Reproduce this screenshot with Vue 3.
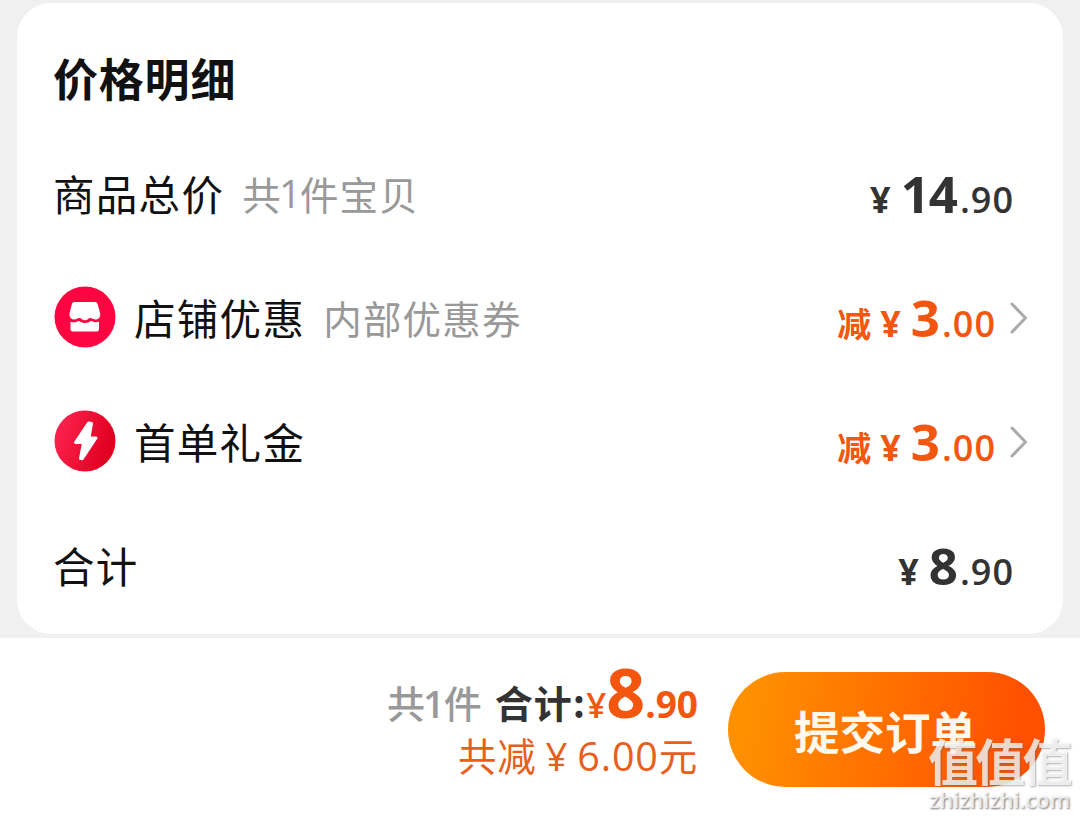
<script setup>
  const rows = [
    { id: 'goods', label: '商品总价', note: ['共', '1', '件宝贝'], int: '14', dec: '.90' },
    { id: 'shop', label: '店铺优惠', note: ['内部优惠券'], icon: 'shop', int: '3', dec: '.00', minus: true },
    { id: 'gift', label: '首单礼金', icon: 'flash', int: '3', dec: '.00', minus: true },
    { id: 'total', label: '合计', int: '8', dec: '.90' },
  ];

  function submit() {
    console.log('submit order');
  }
</script>
<template>
  <div class="page">
    <section class="card">
      <h2 class="title">价格明细</h2>
      <div v-for="row in rows" :key="row.id" class="row">
        <svg v-if="row.icon == 'shop'" class="icon" viewBox="0 0 62 62">
          <circle cx="31" cy="31" r="30.5" fill="#fd0540" />
          <path d="M20.5 16h20.500q2 0 2.600 2l2.500 9c.8 4.500-2 6.500-4.300 6.500-2.800 0-3.500-1.500-5.600-1.500s-2.500 2.300-5.200 2.300-3.500-2.300-5.600-2.300-2.700 1.500-5.200 1.500c-2.700 0-5.200-2-4.600-6.500l2.300-9q.6-2 2.600-2z" fill="#fff" />
          <path d="M16.500 35.800c4 1.300 6.500 0 8.500-1 2.200 2.500 8.500 3.200 12 0 2 1.200 4.500 2 8 1v7.400q0 2.300-2.300 2.300h-23.900q-2.300 0-2.300-2.300z" fill="#fff" />
        </svg>
        <svg v-if="row.icon == 'flash'" class="icon" viewBox="0 0 62 62">
          <defs>
            <linearGradient id="flash" x1="0" y1="0" x2="1" y2="0.3">
              <stop offset="0.1" stop-color="#fd234f" />
              <stop offset="1" stop-color="#e00020" />
            </linearGradient>
          </defs>
          <circle cx="31" cy="31" r="30.5" fill="url(#flash)" />
          <path d="M34.500 13 21.500 32.500h8l-3 16 1.500 .3L42 28h-7l2.500-14.500z" fill="#fff" stroke="#fff" stroke-width="3" stroke-linejoin="round" />
        </svg>
        <span class="label">{{ row.label }}</span>
        <span v-if="row.note" class="note">
          <span v-for="part in row.note" :key="part" :class="{ num: part == '1' }">{{ part }}</span>
        </span>
        <div class="amount" :class="{ minus: row.minus }">
          <span v-if="row.minus" class="cut">减</span>
          <span class="yen">¥</span>
          <span class="int">{{ row.int }}</span>
          <span class="dec">{{ row.dec }}</span>
        </div>
        <svg v-if="row.minus" class="arrow" viewBox="0 0 18 32">
          <path d="M2 2 15.500 16 2 30" fill="none" stroke="#aaa" stroke-width="3" stroke-linecap="round" stroke-linejoin="round" />
        </svg>
      </div>
    </section>

    <footer class="bar">
      <div class="sum">
        <div class="sum-line">
          <span class="count">共<span class="num">1</span>件</span>
          <span class="sum-label">合计:</span>
          <span class="sum-yen">¥</span>
          <span class="sum-int">8</span>
          <span class="sum-dec">.90</span>
        </div>
        <div class="saved">
          <span>共减</span>
          <span class="saved-yen">¥</span>
          <span class="saved-num">6.00</span>
          <span>元</span>
        </div>
      </div>
      <button class="submit" @click="submit">提交订单</button>
    </footer>

    <div class="mark">
      <div class="mark-name">值值值</div>
      <div class="mark-site">zhizhizhi.com</div>
    </div>
  </div>
</template>

<style>
  body {
    margin: 0;
    background: #f0f0f0;
  }
</style>

<style scoped>
  .page {
    position: relative;
    box-sizing: border-box;
    width: 1080px;
    height: 818px;
    padding-top: 3px;
    overflow: hidden;
    background: #f0f0f0;
    font-family: "Open Sans", "Noto Sans CJK SC", sans-serif;
    color: #111;
  }

  .card {
    box-sizing: border-box;
    height: 631px;
    margin: 0 17px;
    padding: 0 35px 0 36px;
    border-radius: 34px;
    background: #fff;
  }

  .title {
    height: 129px;
    margin: 0;
    padding-top: 45px;
    box-sizing: border-box;
    font-family: "Noto Sans CJK SC", sans-serif;
    font-size: 45px;
    line-height: 60px;
    letter-spacing: 0.8px;
    font-weight: 700;
  }

  .row {
    display: flex;
    align-items: center;
    height: 124px;
  }

  .icon {
    width: 62px;
    height: 62px;
    margin: 0 18px 2px 1px;
  }

  .label {
    margin-bottom: 3px;
    font-family: "Noto Sans CJK SC", sans-serif;
    font-size: 41.5px;
    line-height: 60px;
    letter-spacing: 1.3px;
  }

  .note {
    display: flex;
    margin-left: 18px;
    margin-bottom: 3px;
    font-family: "Noto Sans CJK SC", sans-serif;
    font-size: 38.5px;
    line-height: 60px;
    letter-spacing: 1.2px;
    color: #999;
  }

  .num {
    margin: 0 -1px 0 -3px;
    font-family: "Open Sans", sans-serif;
    letter-spacing: 0;
  }

  .amount {
    display: flex;
    align-items: baseline;
    margin-left: auto;
    margin-right: 14px;
    margin-top: 4px;
    line-height: 60px;
    font-weight: 600;
    color: #333;
  }

  .minus {
    margin-right: 14px;
    color: #f2560f;
  }

  .cut {
    margin-right: 9px;
    font-family: "Noto Sans CJK SC", sans-serif;
    font-size: 34px;
    line-height: 40px;
    font-weight: 700;
  }

  .yen {
    margin-right: 10px;
    font-size: 36px;
    line-height: 40px;
    font-weight: 700;
  }

  .int {
    font-size: 51px;
    font-weight: 700;
    letter-spacing: -1px;
  }

  .dec {
    margin-left: 3px;
    font-size: 36px;
    letter-spacing: 1px;
  }

  .arrow {
    width: 18px;
    height: 32px;
    margin-bottom: 1px;
  }

  .bar {
    display: flex;
    align-items: flex-start;
    justify-content: flex-end;
    box-sizing: border-box;
    height: 180px;
    margin-top: 4px;
    padding: 34px 35px 0 0;
    background: #fff;
  }

  .sum {
    display: flex;
    flex-direction: column;
    align-items: flex-end;
    margin-top: -13px;
    margin-right: 30px;
  }

  .sum-line {
    display: flex;
    align-items: baseline;
    height: 72px;
    line-height: 66px;
    font-weight: 700;
    color: #f2560f;
  }

  .count, .sum-label {
    font-family: "Noto Sans CJK SC", sans-serif;
    font-size: 38px;
    line-height: 50px;
    letter-spacing: 1px;
  }

  .count {
    margin-right: 12px;
    font-weight: 500;
    color: #999;
  }

  .count .num {
    font-weight: 600;
  }

  .sum-label {
    color: #333;
  }

  .sum-yen {
    font-size: 35px;
    line-height: 50px;
    font-weight: 600;
  }

  .sum-int {
    font-size: 68px;
    letter-spacing: -1px;
  }

  .sum-dec {
    margin-left: 1px;
    font-size: 37px;
  }

  .saved {
    display: flex;
    align-items: baseline;
    height: 46px;
    font-family: "Noto Sans CJK SC", sans-serif;
    font-size: 38.5px;
    line-height: 46px;
    letter-spacing: 0.8px;
    color: #e85e1c;
  }

  .saved-yen {
    margin: 0 9px;
    font-family: "Open Sans", sans-serif;
    font-weight: 500;
  }

  .saved-num {
    font-family: "Open Sans", sans-serif;
    font-size: 39.5px;
  }

  .submit {
    width: 317px;
    height: 115px;
    padding: 0 3px 0 0;
    border: none;
    border-radius: 58px;
    background: linear-gradient(100deg, #ff9000 8%, #ff5000 90%);
    font-family: "Noto Sans CJK SC", sans-serif;
    font-size: 45.5px;
    font-weight: 700;
    color: #fff8ec;
    cursor: pointer;
  }

  .mark {
    position: absolute;
    left: 928px;
    top: 733px;
    color: rgba(255, 255, 255, 0.76);
    pointer-events: none;
  }

  .mark-name {
    font-family: "Noto Sans CJK SC", sans-serif;
    font-size: 50px;
    font-weight: 700;
    line-height: 52px;
    letter-spacing: -2.8px;
    text-shadow: 1px 1px 2px rgba(100, 100, 100, 0.5);
  }

  .mark-site {
    margin-left: 1px;
    font-size: 21.7px;
    font-weight: 600;
    line-height: 30px;
    text-shadow: 1px 1px 2px rgba(90, 90, 90, 0.8);
  }
</style>
